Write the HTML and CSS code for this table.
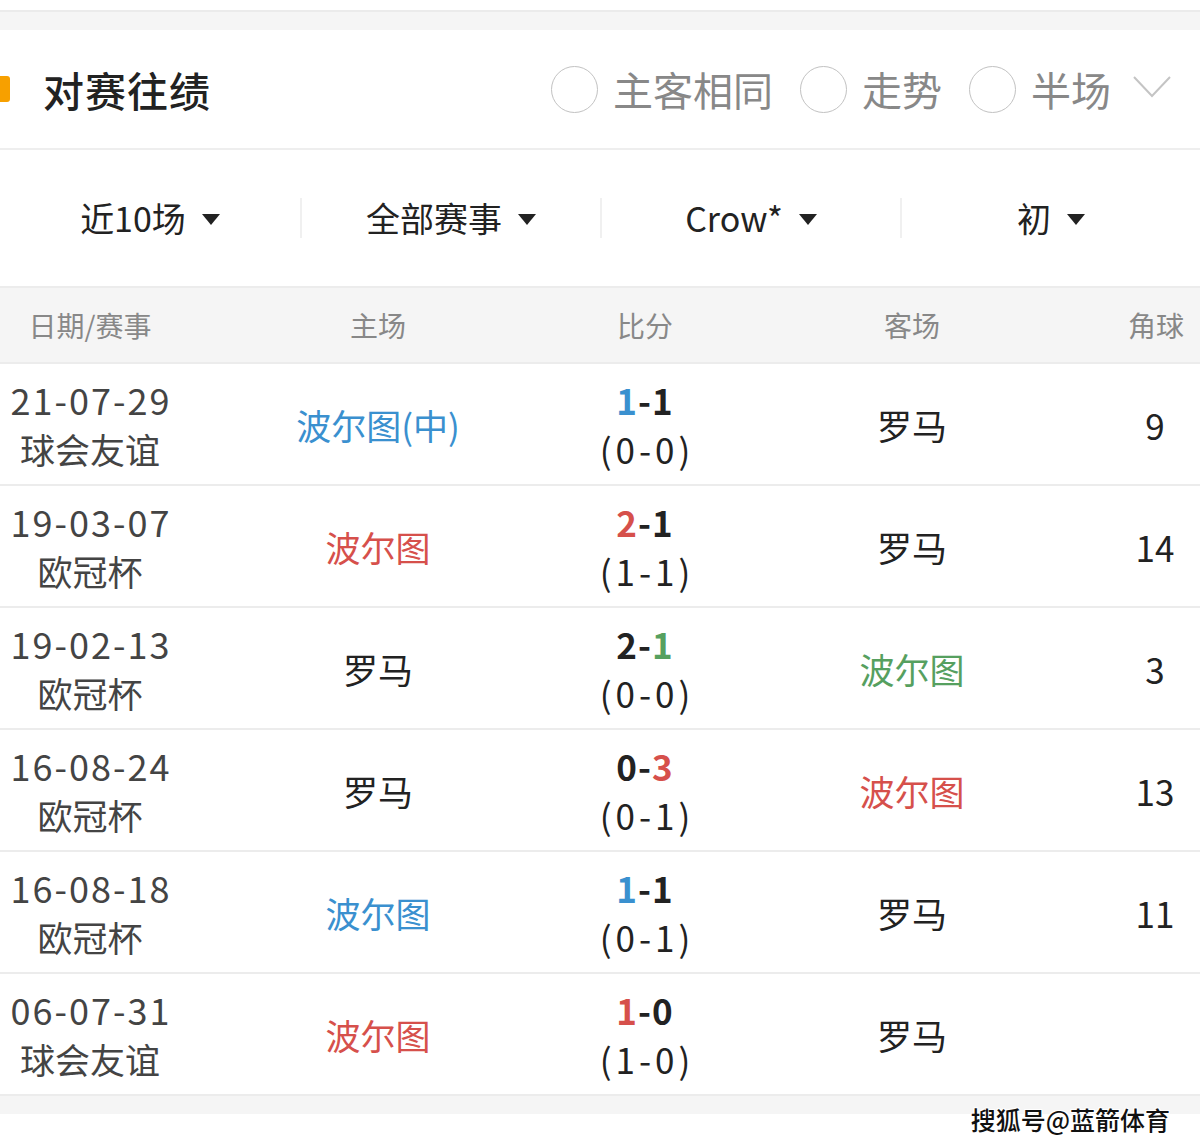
FILE: index.html
```html
<!DOCTYPE html>
<html lang="zh">
<head>
<meta charset="utf-8">
<link rel="stylesheet" href="styles.css">
</head>
<body>
<div class="page">
  <div class="top-gap"></div>
  <div class="top-band"></div>

  <div class="section-head">
    <div class="title-wrap">
      <span class="title-bar"></span>
      <span class="title">对赛往绩</span>
    </div>
    <div class="options">
      <span class="radio"></span><span class="opt">主客相同</span>
      <span class="radio"></span><span class="opt">走势</span>
      <span class="radio"></span><span class="opt">半场</span>
      <svg class="chev" width="40" height="24" viewBox="0 0 40 24"><polyline points="2,2 20,21 38,2" fill="none" stroke="#c4c4c4" stroke-width="2"/></svg>
    </div>
  </div>

  <div class="filters">
    <div class="filter"><span>近10场</span><span class="tri"></span></div>
    <div class="filter sep"><span>全部赛事</span><span class="tri"></span></div>
    <div class="filter sep"><span>Crow*</span><span class="tri"></span></div>
    <div class="filter sep"><span>初</span><span class="tri"></span></div>
  </div>

  <div class="table">
    <div class="thead row-grid">
      <div>日期/赛事</div>
      <div>主场</div>
      <div>比分</div>
      <div>客场</div>
      <div class="corner">角球</div>
    </div>

    <div class="trow row-grid">
      <div class="date"><div class="d">21-07-29</div><div>球会友谊</div></div>
      <div class="team blue">波尔图(中)</div>
      <div class="score"><div class="ft"><span class="blue">1</span>-1</div><div class="ht">(0-0)</div></div>
      <div class="team">罗马</div>
      <div class="corner">9</div>
    </div>

    <div class="trow row-grid">
      <div class="date"><div class="d">19-03-07</div><div>欧冠杯</div></div>
      <div class="team red">波尔图</div>
      <div class="score"><div class="ft"><span class="red">2</span>-1</div><div class="ht">(1-1)</div></div>
      <div class="team">罗马</div>
      <div class="corner">14</div>
    </div>

    <div class="trow row-grid">
      <div class="date"><div class="d">19-02-13</div><div>欧冠杯</div></div>
      <div class="team">罗马</div>
      <div class="score"><div class="ft">2-<span class="green">1</span></div><div class="ht">(0-0)</div></div>
      <div class="team green">波尔图</div>
      <div class="corner">3</div>
    </div>

    <div class="trow row-grid">
      <div class="date"><div class="d">16-08-24</div><div>欧冠杯</div></div>
      <div class="team">罗马</div>
      <div class="score"><div class="ft">0-<span class="red">3</span></div><div class="ht">(0-1)</div></div>
      <div class="team red">波尔图</div>
      <div class="corner">13</div>
    </div>

    <div class="trow row-grid">
      <div class="date"><div class="d">16-08-18</div><div>欧冠杯</div></div>
      <div class="team blue">波尔图</div>
      <div class="score"><div class="ft"><span class="blue">1</span>-1</div><div class="ht">(0-1)</div></div>
      <div class="team">罗马</div>
      <div class="corner">11</div>
    </div>

    <div class="trow row-grid">
      <div class="date"><div class="d">06-07-31</div><div>球会友谊</div></div>
      <div class="team red">波尔图</div>
      <div class="score"><div class="ft"><span class="red">1</span>-0</div><div class="ht">(1-0)</div></div>
      <div class="team">罗马</div>
      <div class="corner"></div>
    </div>
  </div>

  <div class="bottom-band"></div>
  <div class="watermark">搜狐号@蓝箭体育</div>
</div>
</body>
</html>
```

FILE: styles.css
```css
* { box-sizing: border-box; }
html, body { margin: 0; padding: 0; background: #fff; }
body {
  font-family: "Noto Sans CJK SC", "Noto Sans", sans-serif;
  color: #222;
}
.page { position: relative; width: 1200px; height: 1146px; overflow: hidden; }

.top-gap { height: 10px; }
.top-band {
  height: 20px;
  background: #f5f5f5;
  border-top: 2px solid #ebebeb;
}

.section-head {
  height: 120px;
  display: flex;
  align-items: center;
  justify-content: space-between;
  border-bottom: 2px solid #eeeeee;
  padding-right: 28px;
}
.title-wrap { display: flex; align-items: center; }
.title-bar {
  width: 10px; height: 26px;
  background: #f7a000;
  border-radius: 0 3px 3px 0;
  margin-right: 33px;
}
.title {
  font-size: 41px;
  font-weight: 500;
  color: #222;
  line-height: 1;
  letter-spacing: 1px;
}
.options { display: flex; align-items: center; }
.radio {
  width: 47px; height: 47px;
  border: 1.5px solid #c2c2c2;
  border-radius: 50%;
  margin-right: 15px;
}
.opt {
  font-size: 40px;
  color: #888;
  line-height: 1;
  margin-right: 27px;
}
.chev { margin-left: -6px; margin-top: -4px; }

.filters {
  height: 136px;
  display: grid;
  grid-template-columns: repeat(4, 1fr);
  align-items: center;
}
.filter {
  display: flex;
  align-items: center;
  justify-content: center;
  gap: 16px;
  font-size: 34px;
  line-height: 1;
  color: #222;
  height: 40px;
}
.filter.sep { border-left: 2px solid #f0f0f0; }
.tri {
  width: 0; height: 0;
  border-left: 9px solid transparent;
  border-right: 9px solid transparent;
  border-top: 11px solid #222;
  margin-top: 2px;
}

.row-grid {
  display: grid;
  grid-template-columns: 180px 396px 138px 396px 90px;
  align-items: center;
  text-align: center;
}
.thead {
  height: 78px;
  background: #f5f5f5;
  border-top: 2px solid #ececec;
  border-bottom: 2px solid #ececec;
  font-size: 28px;
  color: #888;
}
.thead .corner { text-align: right; padding-right: 16px; }
.trow {
  height: 122px;
  border-bottom: 2px solid #ececec;
  font-size: 35px;
}
.date { color: #444; line-height: 49px; }
.date .d { font-size: 36px; letter-spacing: 2px; margin-right: -2px; }
.team { color: #222; }
.score { line-height: 49px; }
.score .ft { font-weight: 700; letter-spacing: 1px; }
.score .ht { letter-spacing: 4px; margin-right: -4px; }
.corner { text-align: center; }
.blue { color: #3a90cf; }
.red { color: #d6504b; }
.green { color: #56a05f; }

.bottom-band {
  height: 18px;
  background: #f5f5f5;
}
.watermark {
  position: absolute;
  right: 30px;
  top: 1101px;
  font-size: 25px;
  font-weight: 500;
  color: #111;
  text-shadow: 1px 1px 0 #fff, -1px -1px 0 #fff, 1px -1px 0 #fff, -1px 1px 0 #fff;
}
```
